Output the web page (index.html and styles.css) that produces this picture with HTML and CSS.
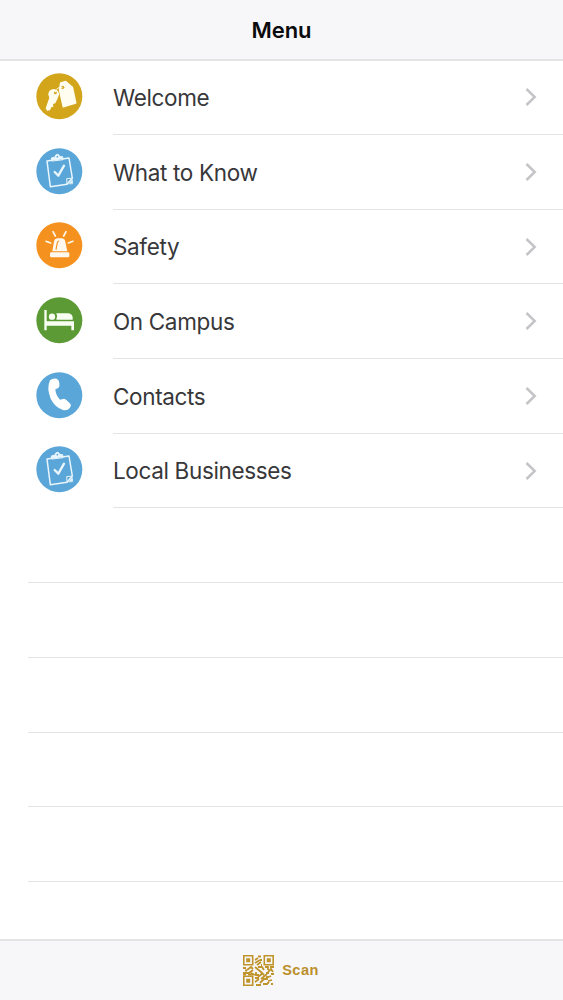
FILE: index.html
```html
<!DOCTYPE html>
<html lang="en">
<head>
<meta charset="utf-8">
<title>Menu</title>
<link rel="stylesheet" href="styles.css">
</head>
<body>
<svg class="defs" aria-hidden="true">
  <symbol id="clipboard" viewBox="0 0 180 180">
    <circle cx="88" cy="88" r="69" fill="#5aa6d8"/>
    <g fill="none" stroke="#e9f5fc" stroke-width="4.5" stroke-linejoin="round" stroke-linecap="round">
      <path d="M66 55 51 57 61 134 111 127 127 108 117 48 97 51"/>
      <path d="M65 56 64 48 75 45Q76 37 82 37Q88 37 89 44L98 44 99 52Z" fill="#e9f5fc" stroke-width="3"/>
      <circle cx="82" cy="44" r="2.500" fill="#5aa6d8" stroke="none"/>
      <path d="M74 90 85 101 102 71" stroke-width="7"/>
      <path d="M111 127 110 110 127 108" stroke-width="3"/>
      <path d="M117 125 127 113 128 124Z" fill="#e9f5fc" stroke-width="2"/>
    </g>
  </symbol>
  <symbol id="chevron" viewBox="0 0 12 20">
    <path d="M1.500 2 9.700 10 1.500 18" fill="none" stroke="#c5c5c9" stroke-width="2.5"/>
  </symbol>
</svg>
<div class="screen">
  <header class="navbar"><h1>Menu</h1></header>
  <main class="list">
    <a class="row">
      <svg class="icon" viewBox="0 0 180 180">
        <circle cx="88" cy="88" r="69" fill="#d3a51b"/>
        <path d="M92 48 107 44 127 61 137 108 100 119 89 70Z" fill="#fffdf0" stroke="#fffdf0" stroke-width="5" stroke-linejoin="round"/>
        <circle cx="98" cy="61" r="5" fill="#d3a51b"/>
        <circle cx="71" cy="82" r="16" fill="#fffdf0"/>
        <path d="M59 89 47 124 51 131 60 130 64 121 70 119 69 111 76 109 84 92Z" fill="#fffdf0"/>
        <circle cx="76" cy="77" r="4.500" fill="#d3a51b"/>
        <path d="M75 76Q82 58 98 61" fill="none" stroke="#fffdf0" stroke-width="3"/>
      </svg>
      <span class="label">Welcome</span>
      <svg class="chevron"><use href="#chevron"/></svg>
    </a>
    <a class="row">
      <svg class="icon"><use href="#clipboard"/></svg>
      <span class="label">What to Know</span>
      <svg class="chevron"><use href="#chevron"/></svg>
    </a>
    <a class="row">
      <svg class="icon" viewBox="0 0 180 180">
        <circle cx="88" cy="88" r="69" fill="#f5921f"/>
        <path d="M67 106 72 77Q74 67 84 67H94Q104 67 106 77L112 106Z" fill="#fff8ee"/>
        <path d="M78 101 82 80Q83 75 88 75" fill="none" stroke="#f5921f" stroke-width="3.500"/>
        <rect x="60" y="109" width="58" height="15" rx="4" fill="#fff8ee"/>
        <path d="M69 47 76 60M108 47 101 60M48 76 62 81M129 76 115 81" fill="none" stroke="#fff8ee" stroke-width="5" stroke-linecap="round"/>
      </svg>
      <span class="label">Safety</span>
      <svg class="chevron"><use href="#chevron"/></svg>
    </a>
    <a class="row">
      <svg class="icon" viewBox="0 0 180 180">
        <circle cx="88" cy="88" r="69" fill="#5c9a35"/>
        <g fill="#f8fff2">
          <path d="M43 57H50V91H132V118H124V104H50V118H43Z"/>
          <circle cx="66" cy="77" r="9.500"/>
          <path d="M79 67H113Q126 68 128 78V86H79Q84 76 79 67Z"/>
        </g>
      </svg>
      <span class="label">On Campus</span>
      <svg class="chevron"><use href="#chevron"/></svg>
    </a>
    <a class="row">
      <svg class="icon" viewBox="0 0 180 180">
        <circle cx="88" cy="88" r="69" fill="#5aa6d8"/>
        <path d="M60 43Q69 35 80 38Q88 42 88 52Q90 62 85 66L76 70Q77 88 90 101L102 98Q107 99 113 106L121 113Q125 118 120 125Q112 135 99 132Q75 124 62 98Q49 66 60 43Z" fill="#fff"/>
      </svg>
      <span class="label">Contacts</span>
      <svg class="chevron"><use href="#chevron"/></svg>
    </a>
    <a class="row">
      <svg class="icon"><use href="#clipboard"/></svg>
      <span class="label">Local Businesses</span>
      <svg class="chevron"><use href="#chevron"/></svg>
    </a>
    <div class="blank"></div>
    <div class="blank"></div>
    <div class="blank"></div>
    <div class="blank"></div>
    <div class="blank"></div>
  </main>
  <footer class="toolbar">
    <svg class="qr" viewBox="0 0 31 31">
      <path fill="none" stroke="#bf942a" stroke-width="1.600" d="M.8.8H9.700V9.700H.8ZM21.300.8H30.200V9.700H21.300ZM.8 21.300H9.700V30.200H.8Z"/>
      <path fill="#bf942a" d="M3.200 3.200h4v4h-4ZM23.800 3.200h4v4h-4ZM3.200 23.800h4v4h-4Z"/>
      <path fill="none" stroke="#bf942a" stroke-width="1.800" d="M15 1.500h3M12 5l3-2M17 5h2M12 8l5-3M14 10l4-3M18 10h1M0 13h3M4 15l4-3 2 2M0 18h6l4-3M2 15.500h2M8 18l4 2M12 12l6 5M15 12h4l2 3M13 17v3h3M17 16l4 4M22 12h3v3M27 12h4M25 17l3-3 2 3M23 18h3M28 19h3M0 19.500h3M5 19.500h5M20 18l-5 4M12 23h4M18 24l6-5M23 23l5-2M12 27l4-3M17 28l4-4h3M25 26l4-1M13 30h5M20 29h4l2-2M28 29h2M24 21v4"/>
    </svg>
    <span class="scan">Scan</span>
  </footer>
</div>
</body>
</html>
```
FILE: styles.css
```css
* { box-sizing: border-box; }
body { margin: 0; background: #fff; font-family: Inter, "Liberation Sans", sans-serif; }
.defs { display: none; }
.screen { height: 1000px; display: flex; flex-direction: column; overflow: hidden; }
.navbar { height: 61px; flex: none; display: flex; align-items: center; justify-content: center; background: #f7f6f9; border-bottom: 2px solid #e4e3e7; }
.navbar h1 { margin: 0; font-size: 22px; line-height: 30px; font-weight: 600; color: #0b0b0d; letter-spacing: -0.1px; }
.list { flex: 1; display: flex; flex-direction: column; margin-top: -0.3px; }
.row { height: 74.7px; flex: none; display: grid; grid-template-columns: 60px 1fr 12px; padding: 0 26.5px 0 30px; column-gap: 23px; align-items: center; background: linear-gradient(#e4e4e7, #e4e4e7) 113px 100% / 100% 1.4px no-repeat; }
.icon { width: 60px; height: 60px; display: block; margin-top: -2px; }
.label { font-size: 22.5px; line-height: 30px; color: #38373a; letter-spacing: -0.35px; white-space: nowrap; }
.chevron { width: 12px; height: 20px; display: block; margin-top: -1.4px; }
.blank { height: 74.7px; flex: none; margin-left: 28px; background: linear-gradient(#e4e4e7, #e4e4e7) 0 100% / 100% 1.4px no-repeat; }
.toolbar { height: 61px; flex: none; display: flex; align-items: center; justify-content: center; gap: 8px; padding: 0 1px 1px 0; background: #f7f6f9; border-top: 2px solid #e4e3e7; }
.qr { width: 31px; height: 31px; display: block; }
.scan { font-size: 14.5px; line-height: 20px; font-weight: 700; color: #bb902c; letter-spacing: 0.5px; font-family: "Liberation Sans", Arial, sans-serif; }
```
